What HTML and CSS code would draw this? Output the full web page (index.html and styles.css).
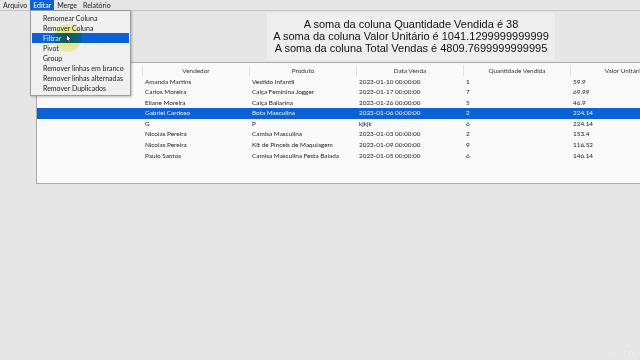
FILE: index.html
```html
<!DOCTYPE html>
<html lang="pt">
<head>
<meta charset="utf-8">
<title>App</title>
<link rel="stylesheet" href="styles.css">
</head>
<body>
<div class="window">
  <nav class="menubar">
    <span class="menu-item">Arquivo</span>
    <span class="menu-item active">Editar</span>
    <span class="menu-item">Merge</span>
    <span class="menu-item">Relatório</span>
  </nav>
  <main class="content">
    <div class="summary">
      <div>A soma da coluna Quantidade Vendida é 38</div>
      <div>A soma da coluna Valor Unitário é 1041.1299999999999</div>
      <div>A soma da coluna Total Vendas é 4809.7699999999995</div>
    </div>
    <div class="grid">
      <div class="row head">
        <div class="cell rh"></div>
        <div class="cell">Vendedor</div>
        <div class="cell">Produto</div>
        <div class="cell">Data Venda</div>
        <div class="cell">Quantidade Vendida</div>
        <div class="cell">Valor Unitário</div>
      </div>
      <div class="row"><div class="cell rh"></div><div class="cell">Amanda Martins</div><div class="cell">Vestido Infantil</div><div class="cell">2023-01-10 00:00:00</div><div class="cell">1</div><div class="cell">59.9</div></div>
      <div class="row"><div class="cell rh"></div><div class="cell">Carlos Moreira</div><div class="cell">Calça Feminina Jogger</div><div class="cell">2023-01-17 00:00:00</div><div class="cell">7</div><div class="cell">69.99</div></div>
      <div class="row"><div class="cell rh"></div><div class="cell">Eliane Moreira</div><div class="cell">Calça Bailarina</div><div class="cell">2023-01-26 00:00:00</div><div class="cell">5</div><div class="cell">46.9</div></div>
      <div class="row selected"><div class="cell rh"></div><div class="cell">Gabriel Cardoso</div><div class="cell">Bota Masculina</div><div class="cell">2023-01-06 00:00:00</div><div class="cell">2</div><div class="cell">224.14</div></div>
      <div class="row"><div class="cell rh"></div><div class="cell">G</div><div class="cell">P</div><div class="cell">kjkjk</div><div class="cell">6</div><div class="cell">224.14</div></div>
      <div class="row"><div class="cell rh"></div><div class="cell">Nicolas Pereira</div><div class="cell">Camisa Masculina</div><div class="cell">2023-01-03 00:00:00</div><div class="cell">2</div><div class="cell">153.4</div></div>
      <div class="row"><div class="cell rh"></div><div class="cell">Nicolas Pereira</div><div class="cell">Kit de Pinceis de Maquiagem</div><div class="cell">2023-01-09 00:00:00</div><div class="cell">9</div><div class="cell">116.52</div></div>
      <div class="row"><div class="cell rh"></div><div class="cell">Paulo Santos</div><div class="cell">Camisa Masculina Festa Balada</div><div class="cell">2023-01-05 00:00:00</div><div class="cell">6</div><div class="cell">146.14</div></div>
    </div>
  </main>

  <ul class="dropdown">
    <li>Renomear Coluna</li>
    <li>Remover Coluna</li>
    <li class="hover">Filtrar</li>
    <li>Pivot</li>
    <li>Group</li>
    <li>Remover linhas em branco</li>
    <li>Remover linhas alternadas</li>
    <li>Remover Duplicados</li>
  </ul>

  <div class="cursor-glow"></div>
  <svg class="cursor" width="6" height="9" viewBox="0 0 6 9">
    <path d="M0.5 0.5 L0.5 7.5 L2 6 L3.2 8.5 L4.3 8 L3.1 5.6 L5.3 5.6 Z" fill="#fff" stroke="#222" stroke-width="0.7" stroke-linejoin="round"/>
  </svg>

  <div class="watermark">Udemy</div>
</div>
</body>
</html>
```

FILE: styles.css
```css
html, body {
  margin: 0;
  padding: 0;
}
body {
  width: 640px;
  height: 360px;
  overflow: hidden;
  background: #e6e6e6;
  font-family: Lato, "Open Sans", sans-serif;
  color: #222;
}
.window {
  position: relative;
  width: 640px;
  height: 360px;
  overflow: hidden;
}
.menubar {
  display: flex;
  height: 10px;
  border-bottom: 1px solid #c4c4c4;
  font-size: 7px;
  line-height: 10px;
  color: #222;
}
.menu-item {
  padding: 0 3px;
}
.menu-item.active {
  background: #0b63d3;
  color: #fff;
}
.content {
  display: flex;
  flex-direction: column;
}
.summary {
  margin: 2px 0 0 267px;
  width: 288px;
  height: 42px;
  padding-top: 5px;
  background: #eeeeee;
  font-family: "Liberation Sans", Arial, sans-serif;
  font-size: 11px;
  line-height: 12px;
  text-align: center;
  color: #111;
}
.grid {
  margin: 2px 0 0 36px;
  width: 700px;
  height: 120px;
  border: 1px solid #ababab;
  border-right: none;
  background: #fafafa;
  font-size: 6.4px;
}
.row {
  display: flex;
  height: 10.6px;
  line-height: 10.6px;
}
.row.head {
  height: 13.5px;
  line-height: 13px;
  color: #333;
}
.row.head .cell {
  text-align: center;
  padding-left: 0;
  border-right: 1px solid #e2e2e2;
  height: 11px;
  margin-top: 1.5px;
  line-height: 11px;
}
.cell {
  width: 107px;
  flex: none;
  padding-left: 2px;
  box-sizing: border-box;
  white-space: nowrap;
  overflow: hidden;
}
.cell.rh {
  width: 106px;
}
.row.selected {
  background: #0b63d3;
  color: #e8f0fc;
}
.dropdown {
  position: absolute;
  left: 30px;
  top: 10px;
  width: 97px;
  margin: 0;
  padding: 1.7px 1px 2px;
  list-style: none;
  background: #f0f0f0;
  border: 1px solid #9c9c9c;
  box-shadow: 1px 1px 2px rgba(0,0,0,0.25);
  font-size: 7px;
}
.dropdown li {
  height: 10px;
  line-height: 10px;
  padding-left: 11px;
  color: #222;
}
.dropdown li.hover {
  background: #0b63d3;
  color: #e8f0fc;
}
.cursor-glow {
  position: absolute;
  left: 54px;
  top: 24px;
  width: 28px;
  height: 28px;
  border-radius: 50%;
  background: radial-gradient(circle, rgba(235,235,40,0.7) 0%, rgba(235,235,40,0.45) 55%, rgba(235,235,40,0) 100%);
  mix-blend-mode: multiply;
}
.cursor {
  position: absolute;
  left: 66px;
  top: 34px;
}
.watermark {
  position: absolute;
  right: 5px;
  bottom: 4px;
  font-family: "Liberation Sans", Arial, sans-serif;
  font-size: 8px;
  font-weight: bold;
  color: #f2f2f2;
  text-shadow: 0 0 1px #c8c8c8;
}
```
